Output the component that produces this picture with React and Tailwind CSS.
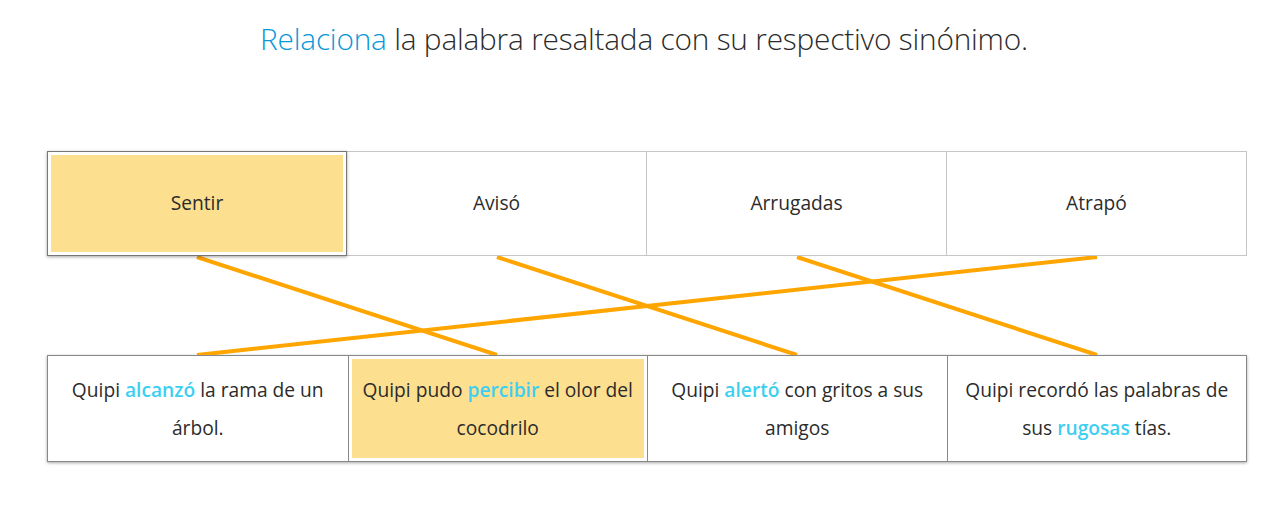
const TOP = ['Sentir', 'Avisó', 'Arrugadas', 'Atrapó']

const BOTTOM = [
  ['Quipi ', 'alcanzó', ' la rama de un árbol.'],
  ['Quipi pudo ', 'percibir', ' el olor del cocodrilo'],
  ['Quipi ', 'alertó', ' con gritos a sus amigos'],
  ['Quipi recordó las palabras de sus ', 'rugosas', ' tías.'],
]

// top index -> bottom index
const LINKS = [[0, 1], [1, 2], [2, 3], [3, 0]]

export default function App() {
  return (
    <div className="w-[1288px] h-[506px] bg-white text-[#2b2b2b] overflow-hidden" style={{ fontFamily: '"Open Sans", "Noto Sans", sans-serif' }}>
      <h1 className="pt-[19px] text-center text-[29.8px] leading-[40px] font-light tracking-[-0.2px]">
        <span className="text-[#0a98d8]">Relaciona</span> la palabra resaltada con su respectivo sinónimo.
      </h1>

      <div className="ml-[47px] mt-[92px] w-[1200px]">
        {/* Words */}
        <div className="flex h-[105px]">
          {TOP.map((w, i) => {
            const sel = i === 0
            return (
              <div
                key={w}
                className={`w-[300px] flex p-[3px] ${sel
                  ? 'border border-[#777] shadow-[0_1px_3px_rgba(0,0,0,0.35)] relative z-10'
                  : 'border-y border-r border-[#c6c6c6]'}`}
              >
                <div className={`flex-1 flex items-center justify-center text-[19.2px] ${sel ? 'bg-[#fddf90]' : ''}`}>
                  {w}
                </div>
              </div>
            )
          })}
        </div>

        {/* Connections */}
        <svg width="1200" height="99" className="block">
          {LINKS.map(([a, b]) => (
            <line
              key={a}
              x1={150 + a * 300}
              y1={1}
              x2={150 + b * 300}
              y2={99}
              stroke="#ffa500"
              strokeWidth="4"
            />
          ))}
        </svg>

        {/* Sentences */}
        <div className="flex h-[107px] border border-[#888] shadow-[0_1px_3px_rgba(0,0,0,0.35)]">
          {BOTTOM.map(([pre, hl, post], i) => {
            const sel = i === 1
            return (
              <div key={i} className={`w-[300px] flex p-[3px] ${i > 0 ? 'border-l border-[#888]' : ''}`}>
                <div className={`flex-1 flex items-center justify-center text-center px-[8px] text-[19.2px] leading-[38px] ${sel ? 'bg-[#fddf90]' : ''}`}>
                  <p>
                    {pre}
                    <span className="text-[#3dcff0] font-semibold">{hl}</span>
                    {post}
                  </p>
                </div>
              </div>
            )
          })}
        </div>
      </div>
    </div>
  )
}
